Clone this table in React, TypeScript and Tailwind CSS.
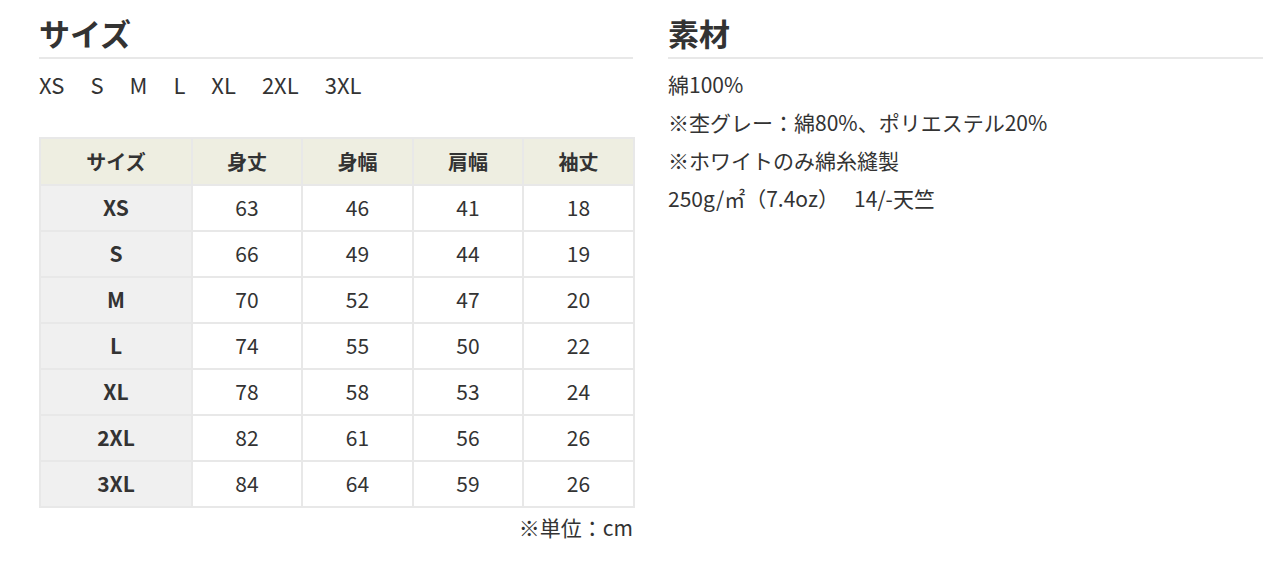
import React from 'react';

const rows = [
  ['XS', '63', '46', '41', '18'],
  ['S', '66', '49', '44', '19'],
  ['M', '70', '52', '47', '20'],
  ['L', '74', '55', '50', '22'],
  ['XL', '78', '58', '53', '24'],
  ['2XL', '82', '61', '56', '26'],
  ['3XL', '84', '64', '59', '26'],
];

const headers = ['サイズ', '身丈', '身幅', '肩幅', '袖丈'];
const colWidths = ['w-[152px]', 'w-[110px]', 'w-[111px]', 'w-[110px]', 'w-[111px]'];
const sizes = ['XS', 'S', 'M', 'L', 'XL', '2XL', '3XL'];

const SectionTitle: React.FC<{ children: React.ReactNode }> = ({ children }) => (
  <h2 className="text-[31px] font-bold leading-[42px] pt-[12px] pb-[3px] border-b-2 border-[#e8e8e8] text-[#333]">
    {children}
  </h2>
);

export default function App() {
  return (
    <div
      className="flex gap-[35px] pl-[39px] pr-[17px] bg-white text-[#333] w-[1280px] h-[568px]"
      style={{ fontFamily: '"Noto Sans CJK JP", "Noto Sans", sans-serif' }}
    >
      <div className="w-[594px] shrink-0">
        <SectionTitle>サイズ</SectionTitle>
        <div className="flex gap-[26px] text-[22px] leading-[50px] h-[78px]">
          {sizes.map((s) => (
            <span key={s}>{s}</span>
          ))}
        </div>
        <table className="border-collapse text-[21px] text-center w-[594px] table-fixed">
          <thead>
            <tr className="bg-[#eeeee1] h-[47px]">
              {headers.map((h, i) => (
                <th key={h} className={`${colWidths[i]} border-2 border-[#e8e8e8] font-bold text-[20px]`}>
                  {h}
                </th>
              ))}
            </tr>
          </thead>
          <tbody>
            {rows.map((r) => (
              <tr key={r[0]} className="h-[46px]">
                {r.map((c, i) => (
                  <td
                    key={i}
                    className={
                      i === 0
                        ? 'border-2 border-[#e8e8e8] bg-[#f0f0f0] font-bold'
                        : 'border-2 border-[#e8e8e8] bg-white'
                    }
                  >
                    {c}
                  </td>
                ))}
              </tr>
            ))}
          </tbody>
        </table>
        <p className="text-right text-[21px] leading-[38px]">※単位：cm</p>
      </div>
      <div className="w-[595px] shrink-0">
        <SectionTitle>素材</SectionTitle>
        <div className="text-[21px] leading-[38px] pt-[6px]">
          <p>綿100%</p>
          <p>※杢グレー：綿80%、ポリエステル20%</p>
          <p>※ホワイトのみ綿糸縫製</p>
          <p>250g/㎡（7.4oz）　 14/-天竺</p>
        </div>
      </div>
    </div>
  );
}
